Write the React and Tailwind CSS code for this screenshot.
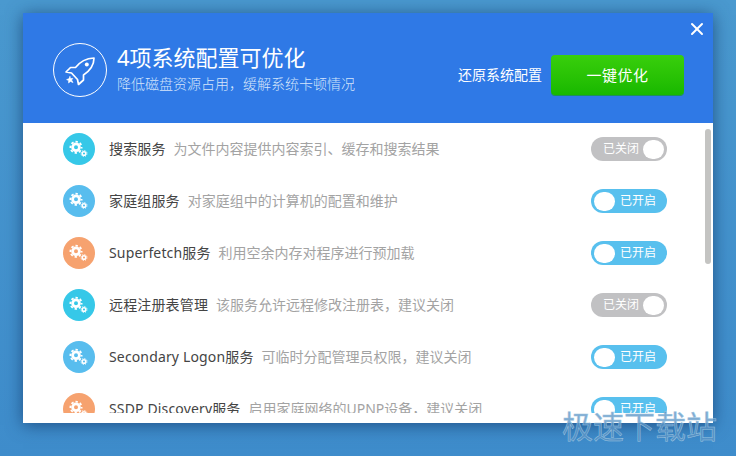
import React from 'react';
import { X } from 'lucide-react';

const rows = [
    { name: '搜索服务', desc: '为文件内容提供内容索引、缓存和搜索结果', on: false, color: 'bg-[#36c8e8]' },
    { name: '家庭组服务', desc: '对家庭组中的计算机的配置和维护', on: true, color: 'bg-[#58bdee]' },
    { name: 'Superfetch服务', desc: '利用空余内存对程序进行预加载', on: true, color: 'bg-[#f6a26f]' },
    { name: '远程注册表管理', desc: '该服务允许远程修改注册表，建议关闭', on: false, color: 'bg-[#36c8e8]' },
    { name: 'Secondary Logon服务', desc: '可临时分配管理员权限，建议关闭', on: true, color: 'bg-[#58bdee]' },
    { name: 'SSDP Discovery服务', desc: '启用家庭网络的UPNP设备，建议关闭', on: true, color: 'bg-[#f6a26f]' },
];

const font = 'font-["Noto_Sans","Noto_Sans_CJK_SC",sans-serif]';

// two gears, the big one with a hole and a small one at lower right
const Gears = () => (
    <svg width="32" height="32" viewBox="0 0 32 32" fill="none" stroke="white">
        <circle cx="13" cy="14.3" r="3.4" strokeWidth="2.8" />
        <circle cx="13" cy="14.3" r="5.6" strokeWidth="1.8" strokeDasharray="2.4 2" strokeDashoffset="1.2" />
        <circle cx="21" cy="20.5" r="1.8" strokeWidth="1.5" />
        <circle cx="21" cy="20.5" r="3" strokeWidth="0.9" strokeDasharray="1.2 1.15" />
    </svg>
);

const RocketIcon = () => (
    <svg width="34" height="34" viewBox="0 0 34 34" fill="none" stroke="white" strokeWidth="1.7" strokeLinejoin="round" strokeLinecap="round">
        <path d="M31 5 C22 5.5 16 10 12.5 14.5 L7.5 14.5 L3 19 L8.5 20 L14.5 26.5 L15.5 31.5 L20.5 27 L20.5 22 C26.5 18 31 12 31 5 Z" />
        <circle cx="23.8" cy="11.6" r="2" fill="white" stroke="none" />
        <path d="M7 23.6 L7.4 25.6 L9.8 25.4 L8.6 27 L10 29.6 L7.4 28.4 L5.6 30 L5.6 27.6 L3.6 26.6 L5.8 25.8 Z" fill="white" strokeWidth="0.6" />
    </svg>
);

const Toggle = ({ on }) => (
    <div className={`flex items-center justify-between h-6 w-[76px] shrink-0 rounded-full px-[3px] ${on ? 'bg-[#58c0ee]' : 'bg-[#c1c1c3]'}`}>
        {on && <span className="w-[21px] h-[19px] rounded-full bg-white" />}
        <span className={`text-xs text-white ${on ? 'mr-2' : 'ml-[9px]'}`}>{on ? '已开启' : '已关闭'}</span>
        {!on && <span className="w-[21px] h-[19px] rounded-full bg-white" />}
    </div>
);

const App = () => {
    return (
        <div className={`relative w-[736px] h-[456px] overflow-hidden pl-[23px] pt-[13px] bg-gradient-to-b from-[#4a99cf] to-[#3e8ccb] ${font}`}>
            <div className="flex flex-col w-[690px] h-[410px] shadow-[0_2px_16px_rgba(20,60,110,0.75)]">
                <div className="relative flex items-center h-[110px] shrink-0 bg-[#2f79e6] pl-[30px] pr-[29px] text-white">
                    <div className="flex items-center justify-center w-[54px] h-[54px] mt-1 rounded-full border border-white">
                        <RocketIcon />
                    </div>
                    <div className="ml-[10px] flex-1">
                        <div className="text-[22px] leading-[30px]">4项系统配置可优化</div>
                        <div className="mt-[2px] text-sm leading-[20px] text-[#d5e5fb] font-light">降低磁盘资源占用，缓解系统卡顿情况</div>
                    </div>
                    <span className="mr-[9px] mt-[14px] text-sm">还原系统配置</span>
                    <button className="w-[133px] h-10 mt-[14px] rounded-sm text-[15px] tracking-[0.5px] bg-gradient-to-b from-[#38cf0c] to-[#17b800] shadow-[0_1px_0_#1e8f5a]">
                        一键优化
                    </button>
                    <X className="absolute top-[6px] right-[6px] w-[20px] h-[20px]" strokeWidth={2.4} />
                </div>
                <div className="relative flex-1 min-h-0 bg-white pb-[10px]">
                    <div className="h-full overflow-hidden">
                        {rows.map((row) => (
                            <div key={row.name} className="flex items-center h-[52px] pl-10 pr-[46px]">
                                <div className={`flex items-center justify-center w-8 h-8 shrink-0 rounded-full ${row.color}`}>
                                    <Gears />
                                </div>
                                <span className="ml-[14px] text-sm tracking-[0.15px] text-[#444]">{row.name}</span>
                                <span className="ml-2 flex-1 text-sm text-[#a3a3a3]">{row.desc}</span>
                                <Toggle on={row.on} />
                            </div>
                        ))}
                    </div>
                    <div className="absolute top-[6px] right-[2px] w-[6px] h-[135px] rounded-full bg-[#c4c4c2]" />
                </div>
            </div>
            <div className="absolute left-[562px] top-[407px] text-[31px] leading-[38px] text-[#5d95c6]/80 [-webkit-text-stroke:0.5px_#9cc4e0]">极速下载站</div>
        </div>
    );
};

export default App;
